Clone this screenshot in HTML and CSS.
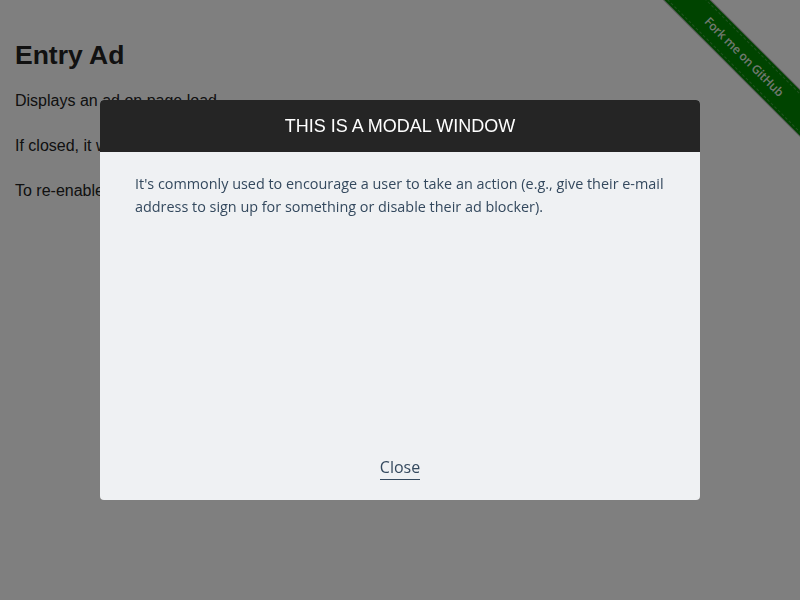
FILE: index.html
```html
<!DOCTYPE html>
<html>
<head>
<meta charset="utf-8">
<link rel="stylesheet" href="styles.css">
</head>
<body>
<div class="page">
  <h1 class="title">Entry Ad</h1>
  <p class="text">Displays an ad on page load.</p>
  <p class="text">If closed, it will not appear on subsequent page loads.</p>
  <p class="text">To re-enable it, <a class="link" href="#">click here</a>.</p>
</div>
<div class="ribbon-wrap"><a class="ribbon" href="#">Fork me on GitHub</a></div>
<div class="overlay"></div>
<div class="modal">
  <div class="modal-header">THIS IS A MODAL WINDOW</div>
  <div class="modal-body">It's commonly used to encourage a user to take an action (e.g., give their e-mail address to sign up for something or disable their ad blocker).</div>
  <div class="modal-footer"><a class="close" href="#">Close</a></div>
</div>
</body>
</html>
```
FILE: styles.css
```css
html, body {
  margin: 0;
  padding: 0;
  background: #fff;
  height: 100%;
  overflow: hidden;
}
.page {
  padding: 40px 15px 0;
  display: flex;
  flex-direction: column;
  gap: 25px;
  font-family: "Liberation Sans", Arial, sans-serif;
  color: #222;
}
.title {
  margin: 0 0 -4px;
  font-size: 26.5px;
  line-height: 30px;
  font-weight: bold;
}
.text {
  margin: 0;
  font-size: 16px;
  line-height: 20px;
}
.link { color: #222; text-decoration: none; }
.ribbon-wrap {
  position: absolute;
  top: 0;
  right: 0;
  width: 150px;
  height: 150px;
  overflow: hidden;
}
.ribbon {
  position: absolute;
  left: -6.5px;
  top: 42.5px;
  width: 200px;
  height: 28px;
  box-sizing: border-box;
  transform: rotate(45deg);
  background: #008800;
  border-top: 1px dashed rgba(255,255,255,0.25);
  border-bottom: 1px dashed rgba(255,255,255,0.25);
  box-shadow: 0 0 0 2px #008800, 0 0 0 3px rgba(0,0,0,0.3);
  color: rgba(255,255,255,0.9);
  font-family: "Open Sans", sans-serif;
  font-size: 12px;
  font-weight: 600;
  letter-spacing: -0.2px;
  line-height: 26px;
  text-align: center;
  text-decoration: none;
}
.overlay {
  position: fixed;
  inset: 0;
  background: rgba(0,0,0,0.5);
}
.modal {
  position: fixed;
  left: 100px;
  top: 100px;
  width: 600px;
  height: 400px;
  display: flex;
  flex-direction: column;
  border-radius: 4px;
  overflow: hidden;
  background: #eff1f3;
}
.modal-header {
  height: 52px;
  background: #252525;
  color: #fff;
  font-family: "Liberation Sans", Arial, sans-serif;
  font-size: 18px;
  line-height: 52px;
  text-align: center;
}
.modal-body {
  flex: 1;
  padding: 20px 35px 0;
  font-family: "Open Sans", sans-serif;
  font-size: 14.4px;
  line-height: 23px;
  color: #34495e;
}
.modal-footer {
  padding-bottom: 22px;
  text-align: center;
  font-family: "Open Sans", sans-serif;
  font-size: 16px;
  line-height: 22px;
}
.close {
  color: #34495e;
  text-decoration: none;
  border-bottom: 1px solid #34495e;
  padding-bottom: 1px;
}
```
